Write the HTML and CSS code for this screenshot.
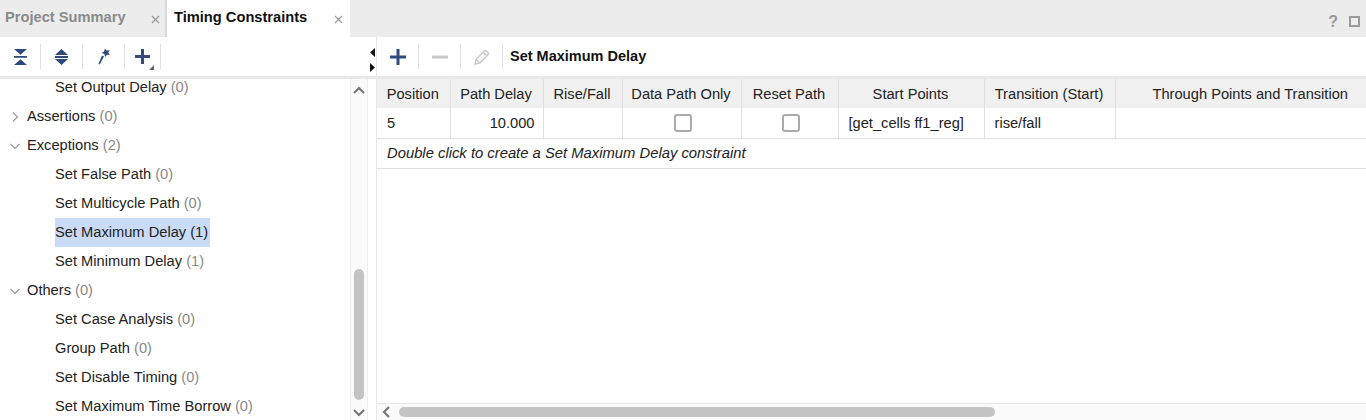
FILE: index.html
```html
<!DOCTYPE html>
<html lang="en">
<head>
    <meta charset="UTF-8">
    <title>Timing Constraints</title>
    <link rel="stylesheet" href="styles.css">
</head>
<body>
    <div class="tabbar">
        <div class="tab">
            <span class="tab-title">Project Summary</span>
            <svg class="tab-close" width="9" height="9" viewBox="0 0 9 9"><path d="M1 1l7 7M8 1l-7 7"/></svg>
        </div>
        <div class="tab tab-active">
            <span class="tab-title">Timing Constraints</span>
            <svg class="tab-close" width="9" height="9" viewBox="0 0 9 9"><path d="M1 1l7 7M8 1l-7 7"/></svg>
        </div>
        <div class="tab-tools">
            <span class="help">?</span>
            <span class="restore"></span>
        </div>
    </div>

    <div class="main">
        <div class="left">
            <div class="toolbar left-toolbar">
                <button class="tool tool-first">
                    <svg width="13" height="16" viewBox="0 0 13 16"><path class="navy" d="M0 0h13L6.500 5.800zM0 6.900h13v1.900H0zM6.500 10.200L13 16H0z"/></svg>
                </button>
                <button class="tool">
                    <svg width="13" height="16" viewBox="0 0 13 16"><path class="navy" d="M6.500 0L13 6H0zM0 7.100h13v1.800H0zM0 10h13l-6.500 6z"/></svg>
                </button>
                <button class="tool">
                    <svg width="12" height="16" viewBox="0 0 12 16"><path class="navy" d="M4 6.500l2 .9L1.700 15.500l-1.300-.6z"/><path class="navy" d="M6.800-.4l1.700 2 3-.4-1.200 2.600 1.600 2.200-2.900-.2-1.800 2.100-.8-2.800-2.700-1.100 2.400-1.600z"/></svg>
                </button>
                <button class="tool tool-plus">
                    <svg width="15" height="15" viewBox="0 0 15 15"><path class="navy" d="M6 0h3v6h6v3H9v6H6V9H0V6h6z"/></svg>
                    <svg class="corner" width="5" height="5" viewBox="0 0 5 5"><path d="M5 0v5H0z"/></svg>
                </button>
            </div>
            <div class="tree-wrap">
                <div class="tree">
                    <ul class="tree-list">
                        <li class="leaf">Set Output Delay <span class="count">(0)</span></li>
                        <li class="branch">
                            <svg class="arrow" width="10" height="10" viewBox="0 0 10 10"><path d="M3 .5L7.500 5 3 9.500"/></svg>
                            <span>Assertions <span class="count">(0)</span></span>
                        </li>
                        <li class="branch">
                            <svg class="arrow" width="10" height="10" viewBox="0 0 10 10"><path d="M.5 3L5 7.500 9.500 3"/></svg>
                            <span>Exceptions <span class="count">(2)</span></span>
                        </li>
                        <li class="leaf">Set False Path <span class="count">(0)</span></li>
                        <li class="leaf">Set Multicycle Path <span class="count">(0)</span></li>
                        <li class="leaf"><span class="selected">Set Maximum Delay (1)</span></li>
                        <li class="leaf">Set Minimum Delay <span class="count">(1)</span></li>
                        <li class="branch">
                            <svg class="arrow" width="10" height="10" viewBox="0 0 10 10"><path d="M.5 3L5 7.500 9.500 3"/></svg>
                            <span>Others <span class="count">(0)</span></span>
                        </li>
                        <li class="leaf">Set Case Analysis <span class="count">(0)</span></li>
                        <li class="leaf">Group Path <span class="count">(0)</span></li>
                        <li class="leaf">Set Disable Timing <span class="count">(0)</span></li>
                        <li class="leaf">Set Maximum Time Borrow <span class="count">(0)</span></li>
                    </ul>
                </div>
                <div class="vscroll">
                    <svg class="sb-arrow" width="12" height="8" viewBox="0 0 12 8"><path d="M1 7l5-5 5 5"/></svg>
                    <div class="vthumb"></div>
                    <svg class="sb-arrow" width="12" height="8" viewBox="0 0 12 8"><path d="M1 1l5 5 5-5"/></svg>
                </div>
            </div>
        </div>

        <div class="splitter">
            <div class="splitter-head">
                <svg width="6" height="9" viewBox="0 0 6 9"><path d="M6 0v9L1 4.500z"/></svg>
                <svg width="6" height="9" viewBox="0 0 6 9"><path d="M1 0v9l5-4.500z"/></svg>
            </div>
        </div>

        <div class="right">
            <div class="toolbar right-toolbar">
                <button class="tool">
                    <svg width="16" height="16" viewBox="0 0 16 16"><path class="navy" d="M6.500 0h3v6.500H16v3H9.500V16h-3V9.500H0v-3h6.500z"/></svg>
                </button>
                <button class="tool">
                    <svg width="16" height="4" viewBox="0 0 16 4"><path class="muted" d="M0 .5h16v3H0z"/></svg>
                </button>
                <button class="tool">
                    <svg width="16" height="16" viewBox="0 0 16 16"><path class="pencil" d="M1 15l1-4.500 8.300-8.600a1.400 1.400 0 0 1 2 0l1.800 1.800a1.400 1.400 0 0 1 0 2L5.800 14zM2 10.500L5.800 14M9 3.300l3.800 3.800"/></svg>
                </button>
                <h2 class="panel-title">Set Maximum Delay</h2>
            </div>
            <div class="table-wrap">
                <table class="grid">
                    <colgroup>
                        <col class="c-pos"><col class="c-delay"><col class="c-rise"><col class="c-data">
                        <col class="c-reset"><col class="c-start"><col class="c-trans"><col class="c-through">
                    </colgroup>
                    <thead>
                        <tr>
                            <th>Position</th>
                            <th>Path Delay</th>
                            <th>Rise/Fall</th>
                            <th>Data Path Only</th>
                            <th>Reset Path</th>
                            <th>Start Points</th>
                            <th>Transition (Start)</th>
                            <th>Through Points and Transition</th>
                        </tr>
                    </thead>
                    <tbody>
                        <tr>
                            <td>5</td>
                            <td class="num">10.000</td>
                            <td></td>
                            <td class="mid"><span class="check"></span></td>
                            <td class="mid"><span class="check"></span></td>
                            <td>[get_cells ff1_reg]</td>
                            <td>rise/fall</td>
                            <td></td>
                        </tr>
                        <tr>
                            <td class="hint" colspan="8">Double click to create a Set Maximum Delay constraint</td>
                        </tr>
                    </tbody>
                </table>
            </div>
            <div class="hscroll">
                <svg class="sb-arrow" width="8" height="12" viewBox="0 0 8 12"><path d="M7 1L2 6l5 5"/></svg>
                <div class="hthumb"></div>
            </div>
        </div>
    </div>
</body>
</html>
```

FILE: styles.css
```css
* { box-sizing: border-box; }
html, body { margin: 0; height: 100%; overflow: hidden; }
body { font-family: "Liberation Sans", Arial, sans-serif; font-size: 14.67px; color: #222; background: #fff; display: flex; flex-direction: column; }

/* tabs */
.tabbar { height: 37px; flex: none; display: flex; background: #ececec; }
.tab { display: flex; align-items: center; justify-content: space-between; width: 167px; padding: 0 5px 4px 5px; color: #8a8a8a; font-weight: bold; border-right: 2px solid #d8d8d8; }
.tab-active { width: 183px; padding: 0 7px 4px 7px; background: #fff; color: #111; border-right: none; }
.tab-close { margin-top: 6px; fill: none; stroke: #999; stroke-width: 1.200; }
.tab-tools { margin-left: auto; display: flex; align-items: center; gap: 11px; padding: 6px 6px 0 0; }
.help { color: #999; font-weight: bold; font-size: 16px; }
.restore { width: 11px; height: 11px; border: 2px solid #999; }

/* layout */
.main { flex: 1; display: flex; min-height: 0; }
.left { width: 368px; flex: none; display: flex; flex-direction: column; }
.right { flex: 1; min-width: 0; display: flex; flex-direction: column; }
.splitter { width: 9px; flex: none; border-right: 1px solid #e8e8e8; }
.splitter-head { height: 42px; padding: 11px 0 0 1px; display: flex; flex-direction: column; gap: 6px; border-bottom: 3px solid #e8e8e8; }
.splitter path { fill: #111; }
.splitter svg { display: block; }

/* toolbars */
.toolbar { height: 42px; flex: none; display: flex; align-items: flex-start; padding-top: 7px; border-bottom: 3px solid #e8e8e8; }
.tool { position: relative; width: 42px; height: 25px; padding: 0; border: none; background: none; border-right: 1px solid #e0e0e0; display: flex; align-items: center; justify-content: center; }
.tool-first { width: 41px; }
.tool-plus { width: 36px; justify-content: flex-start; padding-left: 10px; }
.corner { position: absolute; right: 6px; bottom: -1px; }
.corner path { fill: #666; }
.navy { fill: #2f4a7c; }
.muted { fill: #c8c8c8; }
.pencil { fill: none; stroke: #c8c8c8; stroke-width: 1.400; }
.panel-title { margin: 0 0 0 7px; font-size: 14.500px; line-height: 25px; color: #111; }

/* tree */
.tree-wrap { flex: 1; min-height: 0; display: flex; }
.tree { flex: 1; min-width: 0; overflow: hidden; }
.tree-list { list-style: none; margin: -6px 0 0; padding: 0; }
.tree-list li { height: 29px; line-height: 28px; white-space: nowrap; }
.leaf { padding-left: 55px; }
.branch { display: flex; align-items: flex-start; gap: 7px; padding-left: 10px; }
.arrow { flex: none; margin-top: 10px; fill: none; stroke: #999; stroke-width: 1.100; }
.count { color: #888; }
.selected { display: inline-block; height: 29px; width: 155px; background: #c9dbf7; }

/* scrollbars */
.vscroll { width: 18px; flex: none; background: #fafafa; border-left: 1px solid #eee; border-right: 1px solid #eee; display: flex; flex-direction: column; align-items: center; padding: 7px 0 3px; }
.vthumb { width: 10px; height: 131px; margin-top: auto; margin-bottom: 6px; background: #c4c4c4; border-radius: 5px; }
.sb-arrow { flex: none; fill: none; stroke: #777; stroke-width: 2.200; }
.vthumb + .sb-arrow { margin-top: 3px; }
.hscroll { height: 17px; flex: none; display: flex; align-items: center; padding-left: 5px; background: #fafafa; border-top: 1px solid #e6e6e6; }
.hthumb { width: 596px; height: 10px; margin-left: 9px; background: #c4c4c4; border-radius: 5px; }

/* table */
.table-wrap { flex: 1; min-height: 0; overflow: hidden; }
.grid { table-layout: fixed; width: 1007px; border-collapse: collapse; }
.c-pos { width: 73px; }
.c-delay { width: 93px; }
.c-rise { width: 79px; }
.c-data { width: 119px; }
.c-reset { width: 97px; }
.c-start { width: 146px; }
.c-trans { width: 131px; }
.c-through { width: 269px; }
.grid th { height: 29px; padding: 0 1px 0 0; font-weight: normal; color: #222; background: #f0f0f0; border-right: 1px solid #e0e0e0; white-space: nowrap; }
.grid td { height: 30px; padding: 0 10px; border-right: 1px solid #e0e0e0; border-bottom: 1px solid #e0e0e0; white-space: nowrap; }
.grid th:last-child { border-right: none; padding-left: 2px; }
.grid td:last-child { border-right: none; }
.grid .num { text-align: right; padding-right: 8px; }
.grid .mid { text-align: center; padding: 0 0 0 2px; }
.grid .hint { font-style: italic; font-size: 14.800px; }
.check { display: inline-block; width: 18px; height: 18px; vertical-align: middle; background: #fff; border: 2px solid #aaa; border-radius: 3px; }
```
